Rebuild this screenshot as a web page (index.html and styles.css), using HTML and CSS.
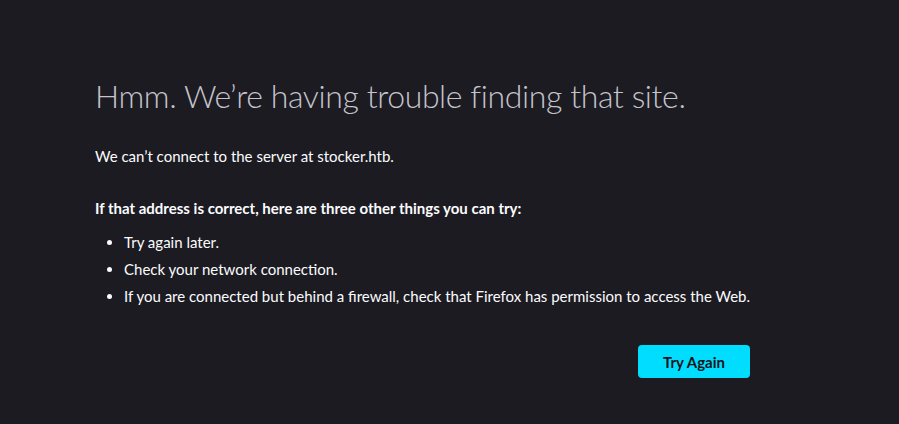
FILE: index.html
```html
<!DOCTYPE html>
<html lang="en">
<head>
<meta charset="utf-8">
<title>Server Not Found</title>
<link rel="stylesheet" href="styles.css">
</head>
<body>
<main class="container">
  <h1 class="title">Hmm. We’re having trouble finding that site.</h1>
  <p class="desc">We can’t connect to the server at stocker.htb.</p>
  <p class="tips-head">If that address is correct, here are three other things you can try:</p>
  <ul class="tips">
    <li>Try again later.</li>
    <li>Check your network connection.</li>
    <li>If you are connected but behind a firewall, check that Firefox has permission to access the Web.</li>
  </ul>
  <div class="actions">
    <button class="btn">Try Again</button>
  </div>
</main>
</body>
</html>
```
FILE: styles.css
```css
html, body {
  margin: 0;
  padding: 0;
  background: #1c1b22;
  height: 100%;
}
body {
  font-family: "Lato", "Noto Sans", sans-serif;
  color: #fbfbfe;
  font-size: 15px;
}
.container {
  padding: 74px 0 0 95px;
  width: 655px;
}
.title {
  margin: 0;
  font-weight: 300;
  font-size: 32px;
  line-height: 44px;
  color: #c4c4cc;
  letter-spacing: -0.4px;
}
.desc {
  margin: 27px 0 0;
  line-height: 22px;
}
.tips-head {
  margin: 30px 0 0;
  font-weight: 700;
  line-height: 22px;
}
.tips {
  margin: 12px 0 0;
  padding-left: 29px;
}
.tips li {
  line-height: 22px;
  margin-bottom: 5px;
  white-space: nowrap;
}
.actions {
  display: flex;
  justify-content: flex-end;
  margin-top: 38px;
}
.btn {
  background: #00ddff;
  color: #15141a;
  border: none;
  border-radius: 4px;
  font-family: inherit;
  font-weight: 700;
  font-size: 15px;
  width: 112px;
  height: 33px;
}
```
